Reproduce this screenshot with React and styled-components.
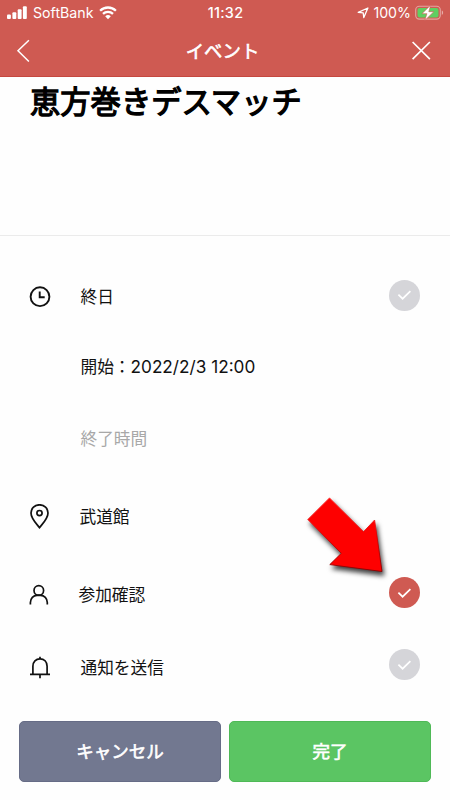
import React, { useState } from 'react';
import styled, { createGlobalStyle } from 'styled-components';

const colors = {
  red: '#cf5a52',
  redEdge: '#c5483f',
  slate: '#727890',
  green: '#5bc563',
  gray: '#d5d5d9',
  text: '#111111',
  placeholder: '#a8a8a8',
};

const App = () => {
  const [allDay, setAllDay] = useState(false);
  const [attendance, setAttendance] = useState(true);
  const [notify, setNotify] = useState(false);

  return (
    <Screen>
      <GlobalStyle />
      <Header>
        <StatusBar>
          <StatusLeft>
            <SignalIcon />
            <Carrier>SoftBank</Carrier>
            <WifiIcon />
          </StatusLeft>
          <Clock>11:32</Clock>
          <StatusRight>
            <LocationIcon />
            <Percent>100%</Percent>
            <BatteryIcon />
          </StatusRight>
        </StatusBar>
        <NavBar>
          <NavButton aria-label="戻る">
            <svg width="14" height="24" viewBox="0 0 14 24" fill="none" stroke="#fff" strokeWidth="1.5">
              <path d="M12.9 1.3 2 11.7l10.9 10.8" />
            </svg>
          </NavButton>
          <NavTitle>イベント</NavTitle>
          <NavButton aria-label="閉じる">
            <svg width="20" height="20" viewBox="0 0 20 20" fill="none" stroke="#fff" strokeWidth="1.7">
              <path d="M1.6 1 18.9 18.2M18.9 1 1.6 18.2" />
            </svg>
          </NavButton>
        </NavBar>
      </Header>

      <TitleArea>
        <EventTitle>恵方巻きデスマッチ</EventTitle>
      </TitleArea>

      <Form>
        <Row $height={70}>
          <IconSlot><ClockIcon /></IconSlot>
          <Label>終日</Label>
          <Toggle $on={allDay} onClick={() => setAllDay(!allDay)}><CheckIcon /></Toggle>
        </Row>
        <Row $height={70}>
          <IconSlot />
          <Label>開始：<DateText>2022/2/3 12:00</DateText></Label>
        </Row>
        <Row $height={73}>
          <IconSlot />
          <Label $muted>終了時間</Label>
        </Row>
        <Row $height={84}>
          <IconSlot><PinIcon /></IconSlot>
          <Label $indent={-1}>武道館</Label>
        </Row>
        <Row $height={72}>
          <IconSlot><PersonIcon /></IconSlot>
          <Label $indent={-2}>参加確認</Label>
          <Toggle $on={attendance} $lift={5} onClick={() => setAttendance(!attendance)}><CheckIcon /></Toggle>
        </Row>
        <Row $height={74}>
          <IconSlot><BellIcon /></IconSlot>
          <Label>通知を送信</Label>
          <Toggle $on={notify} $lift={7} onClick={() => setNotify(!notify)}><CheckIcon /></Toggle>
        </Row>
      </Form>

      <Footer>
        <ActionButton $color={colors.slate} $edge="#666c86">キャンセル</ActionButton>
        <ActionButton $color={colors.green} $edge="#4fb957">完了</ActionButton>
      </Footer>

      <Pointer viewBox="0 0 110 110">
        <defs>
          <linearGradient id="shade" x1="0" y1="0" x2="0" y2="1">
            <stop offset="0" stopColor="#ff5a5a" />
            <stop offset="0.5" stopColor="#e00000" />
            <stop offset="1" stopColor="#8a0000" />
          </linearGradient>
        </defs>
        <path
          d="M29.5 7.8 63.5 41.8 74.6 30 82 81.5 29.8 74.6 41.3 63.3 7.8 29.5Z"
          fill="#fe0000"
          stroke="url(#shade)"
          strokeWidth="0.9"
        />
      </Pointer>
    </Screen>
  );
};

const SignalIcon = () => (
  <svg width="21" height="14" viewBox="0 0 21 14" fill="#fff">
    <rect x="0" y="8.4" width="3.9" height="4.6" rx="1" />
    <rect x="5.4" y="6.2" width="3.9" height="6.8" rx="1" />
    <rect x="10.7" y="3.2" width="3.9" height="9.8" rx="1" />
    <rect x="15.9" y="0.2" width="3.9" height="12.8" rx="1" />
  </svg>
);

const WifiIcon = () => (
  <svg width="18" height="14" viewBox="0 0 18 14" fill="none" stroke="#fff" strokeWidth="2.3">
    <path d="M1.1 4.7a11.3 11.3 0 0 1 15.8 0" />
    <path d="M4 7.8a7.2 7.2 0 0 1 10 0" />
    <path d="M9 13.2 6.2 10.3a4 4 0 0 1 5.6 0Z" fill="#fff" stroke="none" />
  </svg>
);

const LocationIcon = () => (
  <svg width="12" height="12" viewBox="0 0 12 12" fill="none" stroke="#fff" strokeWidth="1.3" strokeLinejoin="round">
    <path d="M10.9 1 6.8 10.6 6.2 5.8 1.2 5.3Z" />
  </svg>
);

const BatteryIcon = () => (
  <svg width="29" height="16" viewBox="0 0 29 16">
    <rect x="0.7" y="1.3" width="24.6" height="12.8" rx="3.6" fill="none" stroke="#fff" strokeOpacity="0.45" strokeWidth="1.1" />
    <path d="M26.8 5.5c1.7.5 1.7 3.9 0 4.4Z" fill="#fff" fillOpacity="0.5" />
    <rect x="2.5" y="3" width="21" height="9.4" rx="2" fill="#5fcf61" />
    <path d="M15.6 0.2 6.9 8.7h5L9.8 15.4l9-8.7h-5Z" fill="#fff" stroke={colors.red} strokeWidth="0.6" />
  </svg>
);

const ClockIcon = () => (
  <svg width="22" height="22" viewBox="0 0 22 22" fill="none" stroke="#111" strokeWidth="1.9">
    <circle cx="11" cy="10.7" r="9.4" />
    <path d="M10.7 5.6v5.7h5" />
  </svg>
);

const PinIcon = () => (
  <svg width="22" height="26" viewBox="0 0 22 26" fill="none" stroke="#111" strokeWidth="1.7">
    <path d="M10.5 23.6C7 19.2 2 14.6 2 9a8.5 8.2 0 0 1 17 0C19 14.6 14 19.2 10.5 23.6Z" />
    <circle cx="10.5" cy="9.1" r="2.6" />
  </svg>
);

const PersonIcon = () => (
  <svg width="22" height="22" viewBox="0 0 22 22" fill="none" stroke="#111" strokeWidth="1.7">
    <circle cx="9.8" cy="6.4" r="4.8" />
    <path d="M1.4 20.4v-1.8c0-4.4 3-7.3 6.6-7.3h3.6c3.6 0 6.7 2.9 6.7 7.3v1.8" />
  </svg>
);

const BellIcon = () => (
  <svg width="22" height="24" viewBox="0 0 22 24" fill="none" stroke="#111" strokeWidth="1.7">
    <path d="M3.9 18.5v-8.2c0-4.6 3-7.5 7.1-7.5s7.1 2.9 7.1 7.5v8.2" />
    <path d="M1 18.4h20M11 .7v2.2M11 18.5v3.8" />
  </svg>
);

const CheckIcon = () => (
  <svg width="15" height="12" viewBox="0 0 15 12" fill="none" stroke="#fff" strokeWidth="1.7">
    <path d="M1.4 5.6 5.6 9.7 13.4 2.1" />
  </svg>
);

const GlobalStyle = createGlobalStyle`
  * {
    box-sizing: border-box;
  }
  body {
    margin: 0;
    background: #fefefe;
    font-family: Inter, 'Noto Sans CJK JP', sans-serif;
    color: ${colors.text};
  }
  button {
    font-family: inherit;
    border: none;
    padding: 0;
    cursor: pointer;
  }
  svg {
    display: block;
    flex: none;
  }
`;

const Screen = styled.div`
  position: relative;
  display: flex;
  flex-direction: column;
  width: 450px;
  height: 800px;
  overflow: hidden;
`;

const Header = styled.header`
  height: 77px;
  background: ${colors.red};
  border-bottom: 1px solid ${colors.redEdge};
  color: #fff;
`;

const StatusBar = styled.div`
  display: grid;
  grid-template-columns: 1fr auto 1fr;
  align-items: center;
  height: 25px;
  padding: 0 6px 0 7px;
  font-size: 14px;
  line-height: 25px;
`;

const StatusLeft = styled.div`
  display: flex;
  align-items: center;
  gap: 5px;
`;

const StatusRight = styled.div`
  display: flex;
  align-items: center;
  justify-content: flex-end;
  gap: 4px;
`;

const Carrier = styled.span`
  font-size: 14.2px;
  margin-right: 1px;
`;

const Clock = styled.span`
  font-size: 14.4px;
  font-weight: 500;
  letter-spacing: 0.3px;
`;

const Percent = styled.span`
  font-size: 14.2px;
`;

const NavBar = styled.div`
  display: flex;
  align-items: center;
  justify-content: space-between;
  height: 51px;
  padding: 0 19px 0 16px;
`;

const NavButton = styled.button`
  display: flex;
  background: none;
`;

const NavTitle = styled.h1`
  margin: 0 0 0 4px;
  font-size: 18.4px;
  line-height: 24px;
  font-weight: 400;
  -webkit-text-stroke: 0.6px #fff;
`;

const TitleArea = styled.div`
  height: 159px;
  padding: 3px 30px 0;
  border-bottom: 1px solid #ebebeb;
`;

const EventTitle = styled.h2`
  margin: 0;
  font-size: 30.3px;
  line-height: 44px;
  font-weight: 400;
  color: #000;
  -webkit-text-stroke: 1.3px #000;
`;

const Form = styled.div`
  padding: 26px 30px 0 29px;
`;

const Row = styled.div`
  display: flex;
  align-items: center;
  height: ${({ $height }) => $height}px;
`;

const IconSlot = styled.div`
  width: 51.5px;
  flex: none;
`;

const Label = styled.div`
  flex: 1;
  margin-left: ${({ $indent }) => $indent || 0}px;
  font-size: 16.7px;
  line-height: 24px;
  color: ${({ $muted }) => ($muted ? colors.placeholder : colors.text)};
`;

const DateText = styled.span`
  font-size: 17.2px;
`;

const Toggle = styled.button`
  display: flex;
  align-items: center;
  justify-content: center;
  width: 31px;
  height: 31px;
  margin-bottom: ${({ $lift }) => $lift || 4}px;
  border-radius: 50%;
  background: ${({ $on }) => ($on ? colors.red : colors.gray)};
`;

const Footer = styled.footer`
  display: grid;
  grid-template-columns: 1fr 1fr;
  gap: 8px;
  padding: 16px 19px 0;
`;

const ActionButton = styled.button`
  height: 61px;
  padding-bottom: 2px;
  border: 1px solid ${({ $edge }) => $edge};
  border-radius: 5px;
  background: ${({ $color }) => $color};
  color: #fff;
  font-size: 17.5px;
  font-weight: 400;
  -webkit-text-stroke: 0.6px #fff;
`;

const Pointer = styled.svg`
  position: absolute;
  left: 300px;
  top: 490px;
  width: 110px;
  height: 110px;
  pointer-events: none;
  filter: drop-shadow(2px 4px 2.5px rgba(0, 0, 0, 0.75));
`;

export default App;
